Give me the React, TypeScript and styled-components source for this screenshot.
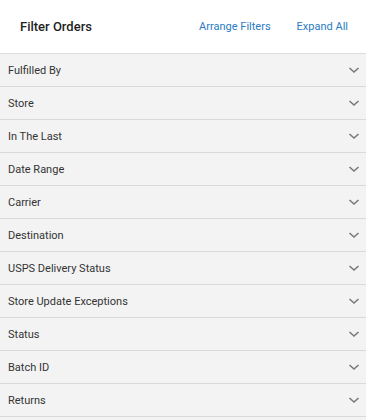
import React from "react";
import styled, { createGlobalStyle } from "styled-components";

const Global = createGlobalStyle`
  html, body { margin: 0; padding: 0; background: #f3f3f3; }
  body { font-family: Roboto, "Liberation Sans", Arial, sans-serif; }
`;

const Panel = styled.div`
  width: 366px;
  display: flex;
  flex-direction: column;
  background: #f3f3f3;
`;

const Header = styled.div`
  height: 53px;
  display: flex;
  align-items: center;
  padding: 0 18px 0 20px;
  background: #ffffff;
  border-bottom: 1px solid #dcdcdc;
`;

const Title = styled.h1`
  margin: 0;
  flex: 1;
  font-size: 13px;
  font-weight: 500;
  color: #1f1f1f;
`;

const Actions = styled.div`
  display: flex;
  gap: 26px;
`;

const LinkButton = styled.button`
  border: none;
  background: none;
  padding: 0;
  font-family: inherit;
  font-size: 11px;
  color: #2a7cc4;
  cursor: pointer;
`;

const Row = styled.div`
  height: 32px;
  display: flex;
  align-items: center;
  justify-content: space-between;
  padding: 0 6px 0 8px;
  border-bottom: 1px solid #d9d9d9;
  background: #f3f3f3;
`;

const Label = styled.span`
  font-size: 11px;
  color: #333333;
`;

const Chevron = styled.svg`
  width: 12px;
  height: 8px;
`;

const filters = [
  "Fulfilled By",
  "Store",
  "In The Last",
  "Date Range",
  "Carrier",
  "Destination",
  "USPS Delivery Status",
  "Store Update Exceptions",
  "Status",
  "Batch ID",
  "Returns",
];

export default function App() {
  return (
    <>
      <Global />
      <Panel>
        <Header>
          <Title>Filter Orders</Title>
          <Actions>
            <LinkButton>Arrange Filters</LinkButton>
            <LinkButton>Expand All</LinkButton>
          </Actions>
        </Header>
        {filters.map((f) => (
          <Row key={f}>
            <Label>{f}</Label>
            <Chevron viewBox="0 0 12 8">
              <path d="M1.5 2 L6 6 L10.5 2" fill="none" stroke="#7a7a7a" strokeWidth="1.6" />
            </Chevron>
          </Row>
        ))}
      </Panel>
    </>
  );
}
